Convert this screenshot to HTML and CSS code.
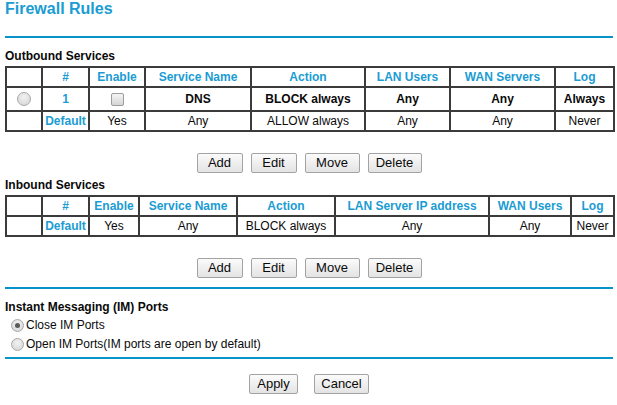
FILE: index.html
```html
<!DOCTYPE html>
<html lang="en">
<head>
    <meta charset="UTF-8">
    <title>Firewall Rules</title>
    <link rel="stylesheet" href="styles.css">
</head>
<body>
    <div class="page">
        <h1 class="title">Firewall Rules</h1>
        <div class="rule first"></div>

        <h2 class="section">Outbound Services</h2>
        <table class="grid">
            <colgroup>
                <col class="c36"><col class="c47"><col class="c56"><col class="c106">
                <col class="c114"><col class="c85"><col class="c105"><col class="c59">
            </colgroup>
            <tr>
                <th></th><th>#</th><th>Enable</th><th>Service Name</th>
                <th>Action</th><th>LAN Users</th><th>WAN Servers</th><th>Log</th>
            </tr>
            <tr class="tall strong">
                <td><span class="radio"></span></td>
                <td class="num">1</td>
                <td><span class="check"></span></td>
                <td>DNS</td>
                <td>BLOCK always</td>
                <td>Any</td>
                <td>Any</td>
                <td>Always</td>
            </tr>
            <tr>
                <td></td>
                <td class="num">Default</td>
                <td>Yes</td>
                <td>Any</td>
                <td>ALLOW always</td>
                <td>Any</td>
                <td>Any</td>
                <td>Never</td>
            </tr>
        </table>

        <div class="actions">
            <button class="btn w46">Add</button>
            <button class="btn w46">Edit</button>
            <button class="btn w55">Move</button>
            <button class="btn w54">Delete</button>
        </div>

        <h2 class="section tight">Inbound Services</h2>
        <table class="grid">
            <colgroup>
                <col class="c36"><col class="c47"><col class="c50"><col class="c98">
                <col class="c98"><col class="c154"><col class="c82"><col class="c43">
            </colgroup>
            <tr>
                <th></th><th>#</th><th>Enable</th><th>Service Name</th>
                <th>Action</th><th>LAN Server IP address</th><th>WAN Users</th><th>Log</th>
            </tr>
            <tr>
                <td></td>
                <td class="num">Default</td>
                <td>Yes</td>
                <td>Any</td>
                <td>BLOCK always</td>
                <td>Any</td>
                <td>Any</td>
                <td>Never</td>
            </tr>
        </table>

        <div class="actions">
            <button class="btn w46">Add</button>
            <button class="btn w46">Edit</button>
            <button class="btn w55">Move</button>
            <button class="btn w54">Delete</button>
        </div>

        <div class="rule"></div>

        <h2 class="section">Instant Messaging (IM) Ports</h2>
        <div class="options">
            <label class="option"><span class="radio small checked"></span>Close IM Ports</label>
            <label class="option"><span class="radio small"></span>Open IM Ports(IM ports are open by default)</label>
        </div>

        <div class="rule close"></div>

        <div class="actions footer">
            <button class="btn w49">Apply</button>
            <button class="btn w55">Cancel</button>
        </div>
    </div>
</body>
</html>
```

FILE: styles.css
```css
body {
    margin: 0;
    padding: 0;
    background: #fff;
    color: #0a0a0a;
    font-family: "Liberation Sans", Arial, sans-serif;
    font-size: 12px;
}

.page {
    width: 608px;
    margin-left: 5px;
}

.title {
    margin: 0;
    font-size: 16px;
    line-height: 18px;
    font-weight: bold;
    color: #1b9cd3;
}

.rule {
    height: 2px;
    background: #0894c9;
    margin-top: 9px;
}

.rule.first {
    margin-top: 18px;
}

.rule.close {
    margin-top: 6px;
}

.section {
    margin: 11px 0 3px;
    font-size: 12px;
    line-height: 14px;
    font-weight: bold;
    color: #0a0a0a;
}

.section.tight {
    margin-top: 5px;
}

.grid {
    width: 608px;
    table-layout: fixed;
    border-collapse: collapse;
}

.grid th,
.grid td {
    border: 2px solid #3b3b3b;
    height: 18px;
    padding: 0 1px;
    text-align: center;
    vertical-align: middle;
    white-space: nowrap;
    line-height: 14px;
}

.grid th {
    color: #1b9cd3;
    font-weight: bold;
}

.grid .num {
    color: #1b9cd3;
    font-weight: bold;
}

.grid tr.tall td {
    height: 22px;
}

.grid tr.strong td {
    font-weight: bold;
}

.c36 { width: 36px; }
.c43 { width: 43px; }
.c47 { width: 47px; }
.c50 { width: 50px; }
.c56 { width: 56px; }
.c59 { width: 59px; }
.c82 { width: 82px; }
.c85 { width: 85px; }
.c98 { width: 98px; }
.c105 { width: 105px; }
.c106 { width: 106px; }
.c114 { width: 114px; }
.c154 { width: 154px; }

.radio {
    display: inline-block;
    width: 12px;
    height: 12px;
    border: 1px solid #a9a9a9;
    border-radius: 50%;
    background: radial-gradient(circle at 50% 35%, #f2f2f2, #d2d2d2);
    vertical-align: middle;
    position: relative;
}

.radio.small {
    width: 11px;
    height: 11px;
}

.radio.checked::after {
    content: "";
    position: absolute;
    left: 3px;
    top: 3px;
    width: 5px;
    height: 5px;
    border-radius: 50%;
    background: #5a5a5a;
}

.check {
    display: inline-block;
    width: 11px;
    height: 11px;
    border: 1px solid #9c9c9c;
    border-radius: 2px;
    background: linear-gradient(#f4f4f4, #d6d6d6);
    vertical-align: middle;
}

.actions {
    display: flex;
    justify-content: center;
    gap: 8px;
    margin-top: 21px;
}

.actions.footer {
    gap: 16px;
    margin-top: 15px;
}

.btn {
    height: 20px;
    padding: 0;
    border: 1px solid #a3a3a3;
    border-radius: 2px;
    background: linear-gradient(#fbfbfb, #e3e3e3);
    color: #0a0a0a;
    font-family: "Liberation Sans", Arial, sans-serif;
    font-size: 13px;
    line-height: 18px;
}

.w46 { width: 46px; }
.w49 { width: 49px; }
.w54 { width: 54px; }
.w55 { width: 55px; }

.options {
    display: flex;
    flex-direction: column;
    gap: 5px;
    padding-left: 6px;
    margin-top: 4px;
}

.option {
    display: flex;
    align-items: center;
    gap: 2px;
    font-size: 12px;
    line-height: 14px;
    color: #0a0a0a;
}
```
